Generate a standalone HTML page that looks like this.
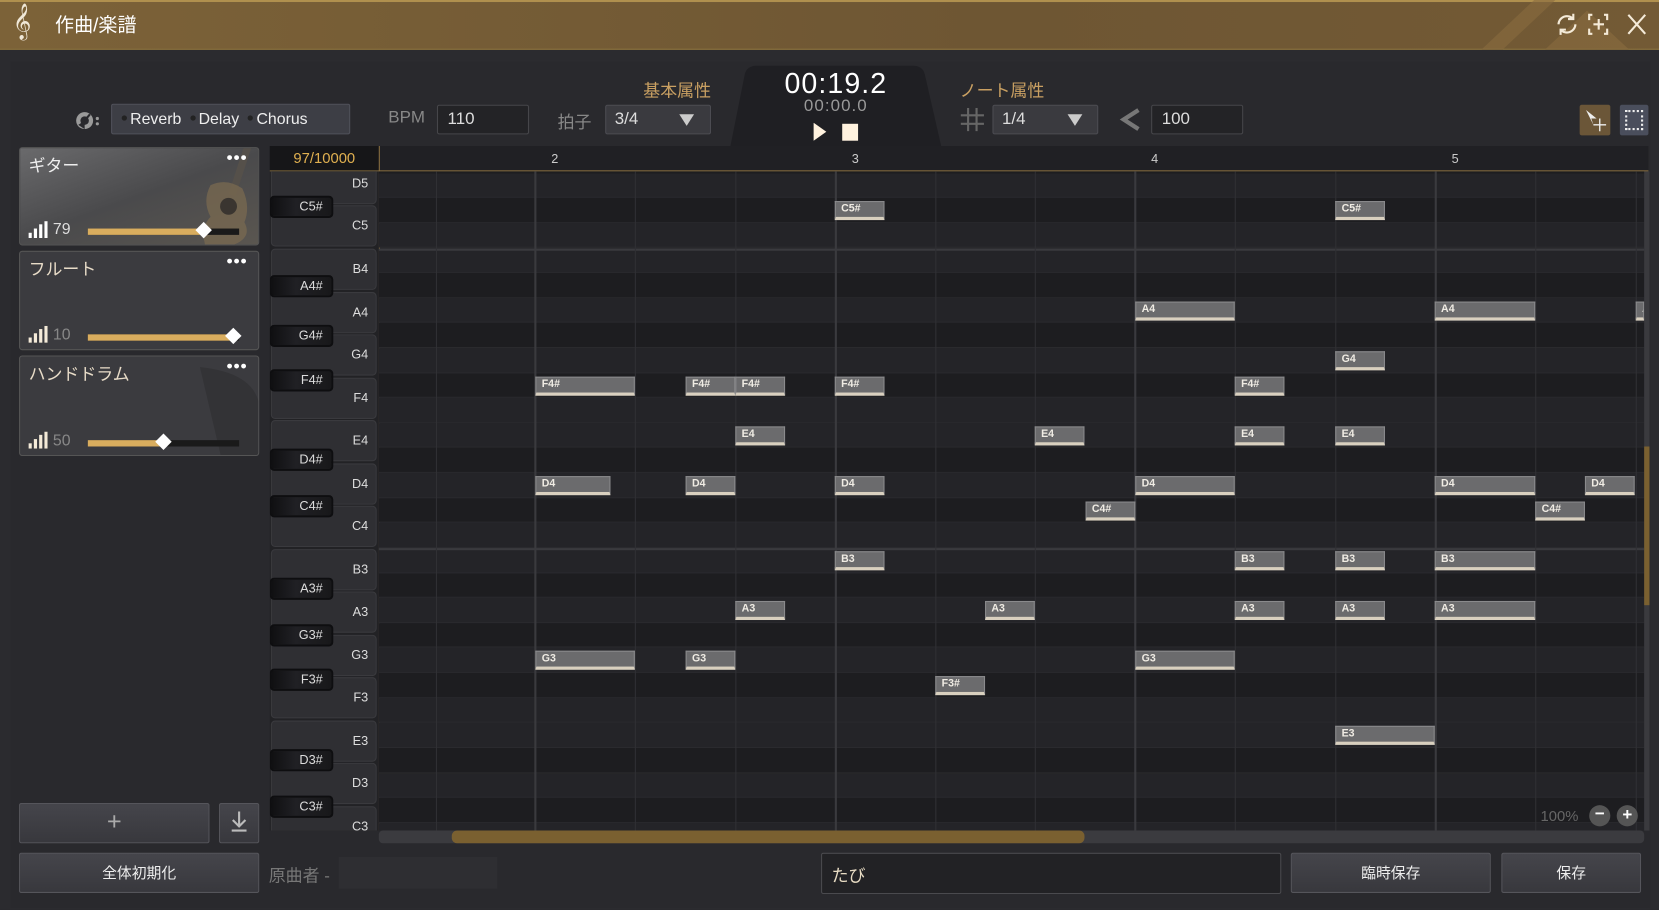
<!DOCTYPE html>
<html><head><meta charset="utf-8">
<style>
*{margin:0;padding:0;box-sizing:border-box}
html,body{width:1659px;height:910px;overflow:hidden;background:#2a2a2e}
#w{position:absolute;left:0;top:0;width:1568px;height:860px;transform:scale(1.05804);transform-origin:0 0;font-family:"Liberation Sans","Noto Sans CJK JP",sans-serif;background:#2b2b2f;overflow:hidden}
.a{position:absolute}
.t{position:absolute;white-space:nowrap}
.title{left:0;top:0;width:1568px;height:47px;background:linear-gradient(90deg,#7c6238,#6e5633 60%,#735a35);border-top:2px solid #b0904e;border-bottom:1px solid #a08040}
.inp{position:absolute;background:#232326;border:1px solid #46464a;border-radius:2px;color:#ddd;font-size:16px;padding-left:9px;line-height:26px}
.sel{position:absolute;background:#3a3a3f;border:1px solid #4c4c52;border-radius:2px;color:#ddd;font-size:16px;padding-left:8px;line-height:26px}
.tri{position:absolute;width:0;height:0;border-left:7px solid transparent;border-right:7px solid transparent;border-top:11px solid #ccc}
.card{position:absolute;left:18px;width:227px;border:1px solid #555;border-radius:3px;overflow:hidden}
.card .nm{position:absolute;left:8px;top:3px;font-size:16px;color:#eee}
.dots{position:absolute;right:10px;top:1px;color:#fff;font-size:16px;font-weight:bold;letter-spacing:1px}
.vol{position:absolute;left:8px;bottom:6px}
.sl{position:absolute;left:64px;width:143px;height:6px;background:#1a1a1a}
.sl i{position:absolute;left:0;top:0;height:6px;background:#d9ad5e}
.sl b{position:absolute;top:-4px;width:11px;height:11px;background:#fff;transform:rotate(45deg)}
.wk{position:absolute;left:256px;width:100px;height:39px;background:#2f2f33;border:1px solid #3a3a3e;border-radius:4px;color:#ddd;font-size:12px;text-align:right;padding-right:7px}
.bk{position:absolute;left:255px;width:60px;height:21px;background:linear-gradient(90deg,#101012,#202024 40%,#18181a);border:2px solid #0e0e10;border-radius:4px;color:#ddd;font-size:12px;text-align:right;padding-right:8px;line-height:17px}
.row{position:absolute;left:358px;width:1196px;height:23.62px;border-bottom:1px solid #2a2a2e}
.rw{background:#242428}.rb{background:#1d1d20}
.vl{position:absolute;top:162px;height:623px;width:1px;background:#303034}
.ml{position:absolute;top:162px;height:623px;width:2px;background:#3a3a3e}
.n{position:absolute;height:18px;background:#6b6b6d;border:1px solid #8a8a8c;border-bottom:3px solid #d9d0bf;color:#f0ece4;font-size:10px;font-weight:bold;padding-left:5px;line-height:13px;overflow:hidden}
.btn{position:absolute;background:linear-gradient(#45454b,#38383d);border:1px solid #55555b;border-radius:2px;color:#eee;font-size:14px;text-align:center}
.dt{display:inline-block;width:5px;height:5px;border-radius:50%;background:#222;vertical-align:3px;margin-right:3px}
</style></head><body><div id="w">
<div class="a title"></div>
<svg class="a" style="left:1390px;top:0" width="178" height="47"><path d="M10 47 L60 0 L80 0 L30 47Z M70 47 L110 10 L150 47Z" fill="#8a6c40" opacity=".6"/></svg>
<div class="t" style="left:12px;top:3px;font-size:30px;color:#f0e8d8;font-family:'DejaVu Sans'">𝄞</div>
<div class="t" style="left:52px;top:10px;font-size:18px;color:#fff">作曲/楽譜</div>
<svg class="a" style="left:1468px;top:10px" width="90" height="26" fill="none" stroke="#f4ead8" stroke-width="2"><path d="M5 13a8 8 0 0 1 14-5M21 13a8 8 0 0 1-14 5"/><path d="M19 3v5h-5M7 23v-5h5"/><path d="M37 4h-3v5M48 4h3v5M37 22h-3v-5M48 22h3v-5M43 8v10M38 13h10"/><path d="M71 4l16 18M87 4L71 22"/></svg>
<div class="a" style="left:10px;top:58px;width:1550px;height:800px;background:#29292d"></div>
<svg class="a" style="left:690px;top:62px" width="200" height="78"><path d="M0 78 L14 8 Q16 0 26 0 L172 0 Q182 0 184 8 L200 78Z" fill="#1f1f23"/></svg>
<div class="t" style="left:690px;top:64px;width:200px;text-align:center;font-size:27px;color:#fff;letter-spacing:1px">00:19.2</div>
<div class="t" style="left:690px;top:92px;width:200px;text-align:center;font-size:16px;color:#999;letter-spacing:1px">00:00.0</div>
<svg class="a" style="left:768px;top:116px" width="46" height="18"><path d="M1 0 L13 8.5 L1 17Z" fill="#fff2de"/><rect x="28" y="1" width="15" height="16" fill="#fff2de"/></svg>
<div class="t" style="left:608px;top:72px;font-size:16px;color:#c9a062">基本属性</div>
<div class="t" style="left:907px;top:72px;font-size:16px;color:#c9a062">ノート属性</div>
<svg class="a" style="left:70px;top:104px" width="26" height="18"><circle cx="10" cy="10" r="8" fill="#9a9a9a"/><circle cx="10" cy="10" r="4" fill="#29292d"/><path d="M10 10 L4 14 L10 18Z" fill="#29292d"/><path d="M10 10 L15 4" stroke="#29292d" stroke-width="2"/><circle cx="22" cy="8" r="1.5" fill="#999"/><circle cx="22" cy="13" r="1.5" fill="#999"/></svg>
<div class="a" style="left:105px;top:98px;width:226px;height:29px;background:#3d3e45;border:1px solid #50515a;border-radius:2px"></div>
<div class="t" style="left:115px;top:104px;font-size:15px;color:#eee"><span class="dt"></span>Reverb &nbsp;<span class="dt"></span>Delay &nbsp;<span class="dt"></span>Chorus</div>
<div class="t" style="left:367px;top:103px;font-size:16px;color:#888">BPM</div>
<div class="inp" style="left:413px;top:99px;width:87px;height:28px">110</div>
<div class="t" style="left:527px;top:102px;font-size:16px;color:#888">拍子</div>
<div class="sel" style="left:572px;top:99px;width:100px;height:28px">3/4</div><div class="tri" style="left:642px;top:108px"></div>
<svg class="a" style="left:908px;top:102px" width="22" height="22" stroke="#666" stroke-width="2"><path d="M7 0v22M15 0v22M0 7h22M0 15h22"/></svg>
<div class="sel" style="left:938px;top:99px;width:100px;height:28px">1/4</div><div class="tri" style="left:1009px;top:108px"></div>
<svg class="a" style="left:1058px;top:102px" width="22" height="22"><path d="M18 2 L4 11 L18 20" fill="none" stroke="#777" stroke-width="4"/></svg>
<div class="inp" style="left:1088px;top:99px;width:87px;height:28px">100</div>
<div class="a" style="left:1493px;top:99px;width:29px;height:29px;background:#6b5638;border-radius:2px"></div>
<svg class="a" style="left:1497px;top:103px" width="22" height="22" fill="#eee"><path d="M2 1 L12 9 L7 9 L9 15Z"/><path d="M15 9v12M9 15h12" stroke="#eee" stroke-width="1.3"/></svg>
<div class="a" style="left:1531px;top:99px;width:27px;height:29px;background:#4a4e5c;border-radius:2px"></div>
<div class="a" style="left:1536px;top:104px;width:17px;height:19px;border:2px dotted #eee"></div>
<div class="card" style="top:139px;height:93px;background:linear-gradient(160deg,#6a6a6c,#4a4a4c 50%,#5a5650)">
<svg class="a" style="left:140px;top:0" width="86" height="92"><rect x="64" y="-5" width="7" height="50" fill="#55504a" transform="rotate(18 66 22)"/><path d="M40 35 Q55 28 70 38 Q78 55 72 70 Q80 85 60 92 L35 92 Q30 75 40 65 Q32 50 40 35Z" fill="#7a6a50" opacity=".75"/><circle cx="57" cy="55" r="8" fill="#3a3530"/></svg>
<div class="nm">ギター</div><div class="dots">•••</div>
<svg class="vol" width="18" height="16" fill="#fff"><rect x="0" y="11" width="3" height="5"/><rect x="5" y="7" width="3" height="9"/><rect x="10" y="3" width="3" height="13"/><rect x="15" y="0" width="3" height="16"/></svg>
<div class="t" style="left:31px;top:68px;font-size:15px;color:#ddd">79</div>
<div class="sl" style="top:76px"><i style="width:110px"></i><b style="left:104px"></b></div></div>
<div class="card" style="top:237px;height:94px;background:#3b3b3f">
<div class="nm" style="color:#e8dcc8">フルート</div><div class="dots">•••</div>
<svg class="vol" width="18" height="16" fill="#f4ead8"><rect x="0" y="11" width="3" height="5"/><rect x="5" y="7" width="3" height="9"/><rect x="10" y="3" width="3" height="13"/><rect x="15" y="0" width="3" height="16"/></svg>
<div class="t" style="left:31px;top:70px;font-size:15px;color:#888">10</div>
<div class="sl" style="top:78px"><i style="width:138px"></i><b style="left:132px"></b></div></div>
<div class="card" style="top:336px;height:95px;background:#3b3b3f">
<svg class="a" style="left:160px;top:5px" width="66" height="90"><path d="M10 5 Q60 10 66 40 L66 90 L30 90Z" fill="#333336"/></svg>
<div class="nm" style="color:#e8dcc8">ハンドドラム</div><div class="dots">•••</div>
<svg class="vol" width="18" height="16" fill="#f4ead8"><rect x="0" y="11" width="3" height="5"/><rect x="5" y="7" width="3" height="9"/><rect x="10" y="3" width="3" height="13"/><rect x="15" y="0" width="3" height="16"/></svg>
<div class="t" style="left:31px;top:71px;font-size:15px;color:#888">50</div>
<div class="sl" style="top:79px"><i style="width:72px"></i><b style="left:66px"></b></div></div>
<div class="btn" style="left:18px;top:759px;width:180px;height:38px;font-size:24px;color:#aaa;line-height:34px;font-weight:300">+</div>
<div class="btn" style="left:207px;top:759px;width:38px;height:38px"></div>
<svg class="a" style="left:217px;top:767px" width="18" height="20" stroke="#bbb" stroke-width="2" fill="none"><path d="M9 0v13M3 8l6 6 6-6M2 18h14"/></svg>
<div class="a" style="left:255px;top:138px;width:1303px;height:24px;background:#202024;border-bottom:1px solid #8a7040"></div>
<div class="a" style="left:255px;top:138px;width:103px;height:23px;background:#161618"></div>
<div class="t" style="left:255px;top:141px;width:103px;text-align:center;font-size:14px;color:#e0b050">97/10000</div>
<div class="a" style="left:358px;top:138px;width:1px;height:647px;background:#8a7040"></div>
<div class="t" style="left:521px;top:143px;font-size:12px;color:#ccc">2</div>
<div class="t" style="left:805px;top:143px;font-size:12px;color:#ccc">3</div>
<div class="t" style="left:1088px;top:143px;font-size:12px;color:#ccc">4</div>
<div class="t" style="left:1372px;top:143px;font-size:12px;color:#ccc">5</div>
<div class="a" style="left:255px;top:162px;width:103px;height:623px;background:#222225;overflow:hidden"></div>
<div class="row rw" style="top:163.6px"></div><div class="row rb" style="top:187.2px"></div><div class="row rw" style="top:210.8px"></div>
<div class="row rw" style="top:234.5px;border-top:2px solid #3a3a3e"></div><div class="row rb" style="top:258.1px"></div><div class="row rw" style="top:281.7px"></div><div class="row rb" style="top:305.3px"></div><div class="row rw" style="top:328.9px"></div><div class="row rb" style="top:352.6px"></div><div class="row rw" style="top:376.2px"></div><div class="row rw" style="top:399.8px"></div><div class="row rb" style="top:423.4px"></div><div class="row rw" style="top:447.0px"></div><div class="row rb" style="top:470.7px"></div><div class="row rw" style="top:494.3px"></div>
<div class="row rw" style="top:517.9px;border-top:2px solid #3a3a3e"></div><div class="row rb" style="top:541.5px"></div><div class="row rw" style="top:565.1px"></div><div class="row rb" style="top:588.8px"></div><div class="row rw" style="top:612.4px"></div><div class="row rb" style="top:636.0px"></div><div class="row rw" style="top:659.6px"></div><div class="row rw" style="top:683.2px"></div><div class="row rb" style="top:706.9px"></div><div class="row rw" style="top:730.5px"></div><div class="row rb" style="top:754.1px"></div><div class="row rw" style="top:777.7px;height:8px"></div>
<div class="a" style="left:358px;top:162px;width:1196px;height:2px;background:#1d1d20"></div>
<div class="vl" style="left:412px"></div><div class="ml" style="left:505px"></div><div class="vl" style="left:600px"></div><div class="vl" style="left:695px"></div><div class="ml" style="left:789px"></div><div class="vl" style="left:884px"></div><div class="vl" style="left:978px"></div><div class="ml" style="left:1072px"></div><div class="vl" style="left:1167px"></div><div class="vl" style="left:1262px"></div><div class="ml" style="left:1356px"></div><div class="vl" style="left:1451px"></div><div class="vl" style="left:1546px"></div>
<div class="a" style="left:255px;top:162px;width:103px;height:623px;overflow:hidden">
<div class="wk" style="left:1px;top:-8.5px;line-height:37px">D5</div>
<div class="wk" style="left:1px;top:32px;line-height:37px">C5</div>
<div class="wk" style="left:1px;top:73px;line-height:37px">B4</div>
<div class="wk" style="left:1px;top:113.5px;line-height:37px">A4</div>
<div class="wk" style="left:1px;top:154px;line-height:37px">G4</div>
<div class="wk" style="left:1px;top:194.5px;line-height:37px">F4</div>
<div class="wk" style="left:1px;top:235px;line-height:37px">E4</div>
<div class="wk" style="left:1px;top:275.5px;line-height:37px">D4</div>
<div class="wk" style="left:1px;top:316px;line-height:37px">C4</div>
<div class="wk" style="left:1px;top:356.5px;line-height:37px">B3</div>
<div class="wk" style="left:1px;top:397px;line-height:37px">A3</div>
<div class="wk" style="left:1px;top:437.5px;line-height:37px">G3</div>
<div class="wk" style="left:1px;top:478px;line-height:37px">F3</div>
<div class="wk" style="left:1px;top:518.5px;line-height:37px">E3</div>
<div class="wk" style="left:1px;top:559px;line-height:37px">D3</div>
<div class="wk" style="left:1px;top:599.5px;line-height:37px">C3</div>
<div class="bk" style="left:0;top:23px">C5#</div>
<div class="bk" style="left:0;top:98px">A4#</div>
<div class="bk" style="left:0;top:145px">G4#</div>
<div class="bk" style="left:0;top:187px">F4#</div>
<div class="bk" style="left:0;top:262px">D4#</div>
<div class="bk" style="left:0;top:306px">C4#</div>
<div class="bk" style="left:0;top:384px">A3#</div>
<div class="bk" style="left:0;top:428px">G3#</div>
<div class="bk" style="left:0;top:470px">F3#</div>
<div class="bk" style="left:0;top:546px">D3#</div>
<div class="bk" style="left:0;top:590px">C3#</div>
</div>
<div class="n" style="left:789px;top:190px;width:47px">C5#</div>
<div class="n" style="left:1262px;top:190px;width:47px">C5#</div>
<div class="n" style="left:1073px;top:285px;width:94px">A4</div>
<div class="n" style="left:1356px;top:285px;width:95px">A4</div>
<div class="n" style="left:1546px;top:285px;width:8px">A</div>
<div class="n" style="left:1262px;top:332px;width:47px">G4</div>
<div class="n" style="left:506px;top:356px;width:94px">F4#</div>
<div class="n" style="left:648px;top:356px;width:47px">F4#</div>
<div class="n" style="left:695px;top:356px;width:47px">F4#</div>
<div class="n" style="left:789px;top:356px;width:47px">F4#</div>
<div class="n" style="left:1167px;top:356px;width:47px">F4#</div>
<div class="n" style="left:695px;top:403px;width:47px">E4</div>
<div class="n" style="left:978px;top:403px;width:47px">E4</div>
<div class="n" style="left:1167px;top:403px;width:47px">E4</div>
<div class="n" style="left:1262px;top:403px;width:47px">E4</div>
<div class="n" style="left:506px;top:450px;width:71px">D4</div>
<div class="n" style="left:648px;top:450px;width:47px">D4</div>
<div class="n" style="left:789px;top:450px;width:47px">D4</div>
<div class="n" style="left:1073px;top:450px;width:94px">D4</div>
<div class="n" style="left:1356px;top:450px;width:95px">D4</div>
<div class="n" style="left:1498px;top:450px;width:47px">D4</div>
<div class="n" style="left:1026px;top:474px;width:47px">C4#</div>
<div class="n" style="left:1451px;top:474px;width:47px">C4#</div>
<div class="n" style="left:789px;top:521px;width:47px">B3</div>
<div class="n" style="left:1167px;top:521px;width:47px">B3</div>
<div class="n" style="left:1262px;top:521px;width:47px">B3</div>
<div class="n" style="left:1356px;top:521px;width:95px">B3</div>
<div class="n" style="left:695px;top:568px;width:47px">A3</div>
<div class="n" style="left:931px;top:568px;width:47px">A3</div>
<div class="n" style="left:1167px;top:568px;width:47px">A3</div>
<div class="n" style="left:1262px;top:568px;width:47px">A3</div>
<div class="n" style="left:1356px;top:568px;width:95px">A3</div>
<div class="n" style="left:506px;top:615px;width:94px">G3</div>
<div class="n" style="left:648px;top:615px;width:47px">G3</div>
<div class="n" style="left:1073px;top:615px;width:94px">G3</div>
<div class="n" style="left:884px;top:639px;width:47px">F3#</div>
<div class="n" style="left:1262px;top:686px;width:94px">E3</div>
<div class="a" style="left:1554px;top:162px;width:5px;height:623px;background:#3a3a3e"></div>
<div class="a" style="left:1554px;top:422px;width:5px;height:150px;background:#7a6030"></div>
<div class="a" style="left:358px;top:785px;width:1196px;height:12px;background:#3b3b3f;border-radius:4px"></div>
<div class="a" style="left:427px;top:785px;width:598px;height:12px;background:#7a6030;border-radius:5px"></div>
<div class="t" style="left:1456px;top:763px;font-size:14px;color:#666">100%</div>
<div class="a" style="left:1502px;top:761px;width:20px;height:20px;border-radius:50%;background:#555;color:#fff;text-align:center;font-size:16px;line-height:18px;font-weight:bold">−</div>
<div class="a" style="left:1528px;top:761px;width:20px;height:20px;border-radius:50%;background:#555;color:#fff;text-align:center;font-size:16px;line-height:19px;font-weight:bold">+</div>
<div class="btn" style="left:18px;top:806px;width:227px;height:38px;line-height:36px">全体初期化</div>
<div class="t" style="left:254px;top:814px;font-size:16px;color:#777">原曲者 -</div>
<div class="a" style="left:320px;top:810px;width:150px;height:30px;background:#2e2e32"></div>
<div class="a" style="left:776px;top:806px;width:435px;height:39px;background:#222225;border:1px solid #4a4a4e;border-radius:2px"></div>
<div class="t" style="left:786px;top:814px;font-size:16px;color:#e8dcc4">たび</div>
<div class="btn" style="left:1220px;top:806px;width:189px;height:38px;line-height:36px">臨時保存</div>
<div class="btn" style="left:1419px;top:806px;width:132px;height:38px;line-height:36px">保存</div>
</div></body></html>
